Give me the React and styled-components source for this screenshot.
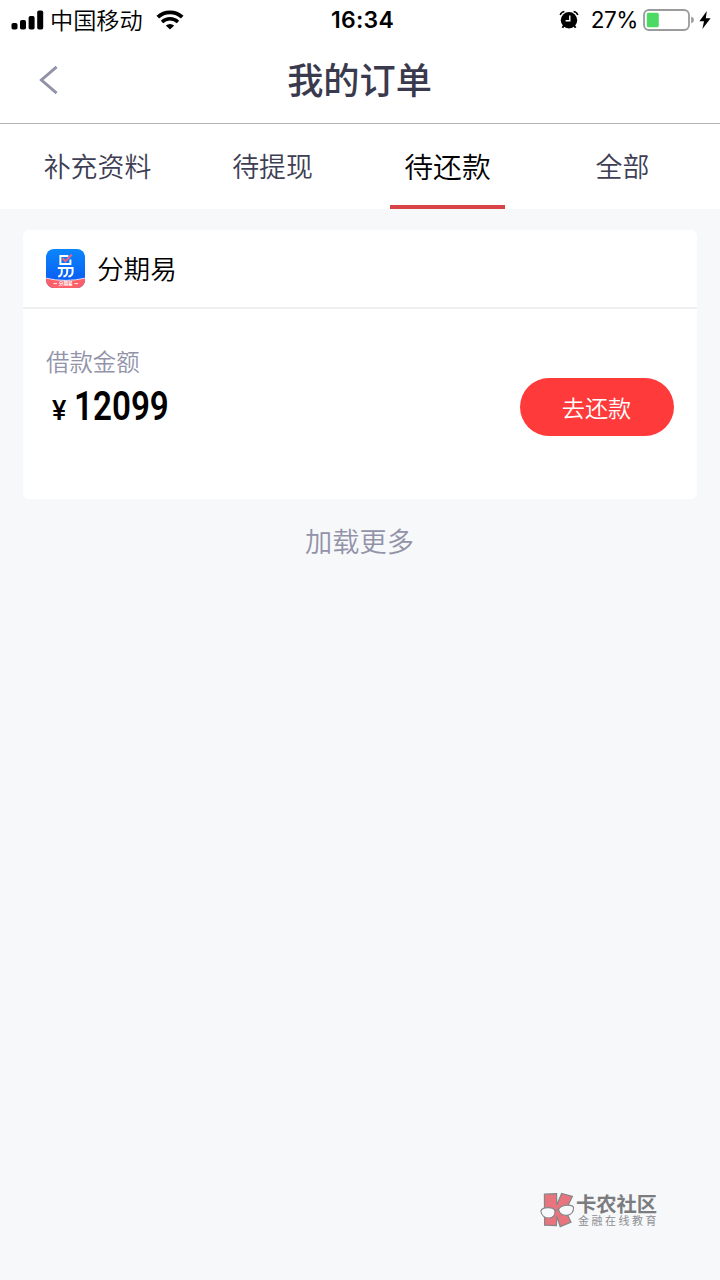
import React from 'react'
import styled, { createGlobalStyle } from 'styled-components'

const tabs = [
  { id: 'info', label: '补充资料' },
  { id: 'withdraw', label: '待提现' },
  { id: 'repay', label: '待还款' },
  { id: 'all', label: '全部' },
]

const App = () => {
  return (
    <Page>
      <GlobalStyle />
      <StatusBar>
        <StatusLeft>
          <SignalIcon />
          <Carrier>中国移动</Carrier>
          <WifiIcon />
        </StatusLeft>
        <Clock>16:34</Clock>
        <StatusRight>
          <AlarmIcon />
          <Percent>27%</Percent>
          <BatteryIcon />
          <BoltIcon />
        </StatusRight>
      </StatusBar>

      <Header>
        <BackButton>
          <BackIcon />
        </BackButton>
        <Title>我的订单</Title>
      </Header>

      <Tabs>
        {tabs.map(tab => (
          <Tab key={tab.id}>
            <TabLabel $active={tab.id === 'repay'}>{tab.label}</TabLabel>
          </Tab>
        ))}
      </Tabs>

      <Content>
        <Card>
          <CardHeader>
            <BrandIcon />
            <Brand>分期易</Brand>
          </CardHeader>
          <CardBody>
            <Loan>
              <LoanLabel>借款金额</LoanLabel>
              <Amount>
                <Currency>¥</Currency>
                <Digits>12099</Digits>
              </Amount>
            </Loan>
            <PayButton>去还款</PayButton>
          </CardBody>
        </Card>
        <LoadMore>加载更多</LoadMore>
      </Content>

      <Footer>
        <CommunityLogo />
        <CommunityText>
          <CommunityName>卡农社区</CommunityName>
          <CommunitySlogan>金融在线教育</CommunitySlogan>
        </CommunityText>
      </Footer>
    </Page>
  )
}

export default App

const SignalIcon = () => (
  <svg width="33" height="20" viewBox="0 0 33 20">
    <rect x="0.5" y="13" width="6" height="6.5" rx="1.8" />
    <rect x="9" y="10" width="6" height="9.5" rx="1.8" />
    <rect x="17.6" y="6" width="6" height="13.5" rx="1.8" />
    <rect x="26.2" y="0.5" width="6" height="19" rx="1.8" />
  </svg>
)

const WifiIcon = () => (
  <svg width="28" height="20" viewBox="0 0 28 20">
    <path d="M1.8 7.2 A17.6 17.6 0 0 1 26.2 7.2" fill="none" stroke="#000" strokeWidth="3.8" />
    <path d="M6 12 A11.6 11.6 0 0 1 22 12" fill="none" stroke="#000" strokeWidth="3.4" />
    <path d="M9.8 15.6 Q14 12.2 18.2 15.6 L14 19.6 Z" />
  </svg>
)

const AlarmIcon = () => (
  <svg width="20" height="20" viewBox="0 0 20 20">
    <circle cx="10" cy="10.2" r="8.2" />
    <path d="M1.2 5 Q2 2 5.4 1.4 M18.8 5 Q18 2 14.6 1.4" fill="none" stroke="#000" strokeWidth="1.5" />
    <path d="M4.8 15.8 L3.4 17.8 M15.2 15.8 L16.6 17.8" stroke="#000" strokeWidth="2" />
    <path d="M10.8 5.4 V10.8 H6.6" fill="none" stroke="#fff" strokeWidth="1.4" />
  </svg>
)

const BatteryIcon = () => (
  <svg width="52" height="22" viewBox="0 0 52 22">
    <rect x="1" y="1" width="45" height="20" rx="5" fill="#fff" stroke="#9b9b9b" strokeWidth="1.8" />
    <rect x="3.8" y="3.8" width="12" height="14.4" rx="1.6" fill="#4cd964" />
    <path d="M48.2 7.6 Q51 8.6 51 11 Q51 13.4 48.2 14.4 Z" fill="#9b9b9b" />
  </svg>
)

const BoltIcon = () => (
  <svg width="12" height="18" viewBox="0 0 12 18">
    <path d="M7.8 0 L0.4 10.2 H5 L3.4 18 L11.6 7.2 H6.8 Z" />
  </svg>
)

const BackIcon = () => (
  <svg width="20" height="30" viewBox="0 0 20 30">
    <path d="M17.6 1.8 L2.4 15 L17.6 28.2" fill="none" stroke="#9192a8" strokeWidth="2.9" />
  </svg>
)

const BrandIcon = () => (
  <svg width="39" height="39" viewBox="0 0 39 39">
    <defs>
      <linearGradient id="brandBlue" x1="0" y1="0" x2="0" y2="1">
        <stop offset="0" stopColor="#0a86fb" />
        <stop offset="1" stopColor="#0a55f3" />
      </linearGradient>
      <clipPath id="brandClip">
        <rect width="39" height="39" rx="8" />
      </clipPath>
    </defs>
    <g clipPath="url(#brandClip)">
      <rect width="39" height="39" fill="url(#brandBlue)" />
      <path d="M-1 29 Q19.5 33.8 40 29 V40 H-1 Z" fill="#fd6068" stroke="#fff" strokeWidth="0.8" />
      <path d="M22.4 6.9 H14.4 V15 H24.4 V10.6" fill="none" stroke="#fff" strokeWidth="2" />
      <path d="M16.6 9.2 L19.4 12.2 L25.8 5.6" fill="none" stroke="#f0627c" strokeWidth="2" />
      <path
        d="M11.8 18.9 H26.6 V22.6 Q26.6 27.2 22.4 27.6 M15.8 19 V23 Q15.6 27 12.2 27.6 M21.2 19 V23 Q21 27 17.4 27.6"
        fill="none"
        stroke="#fff"
        strokeWidth="2"
      />
      <path d="M7.5 34.6 H11 M28.5 34.6 H32" stroke="#fff" strokeWidth="0.9" />
      <SealText x="19.7" y="36.3" textAnchor="middle">分期易</SealText>
    </g>
  </svg>
)

const CommunityLogo = () => (
  <svg width="36" height="38" viewBox="0 0 36 38">
    <path
      d="M4.4 3.2 L16.6 2.6 L16.8 14 L21.6 2.4 L32.4 5.4 L25.6 19.4 L31 31.2 L20.2 35.6 L16.8 25.4 L16.4 34.6 L4.6 34.2 Z"
      fill="#e8747d"
      stroke="#85868a"
      strokeWidth="1.2"
    />
    <g fill="#f7f8fa" stroke="#85868a" strokeWidth="1.1">
      <path d="M0.8 20 Q2 16.6 8 16.6 Q14.6 16.6 15 20.4 Q15 26.6 9 27 Q2 27 0.8 20 Z" />
      <path d="M18.6 18.6 Q20 14.8 26.4 14.2 Q32.8 13.8 33.6 16.6 Q33.6 23.6 27 24.4 Q20 24.8 18.6 18.6 Z" />
      <path d="M15 20 Q16.8 17.8 18.6 18.8" fill="none" />
    </g>
  </svg>
)

const GlobalStyle = createGlobalStyle`
  * {
    box-sizing: border-box;
  }
  body {
    margin: 0;
    background: #f7f8fa;
    font-family: "Noto Sans CJK SC", sans-serif;
  }
  svg {
    display: block;
    flex-shrink: 0;
  }
`

const Page = styled.div`
  width: 720px;
  height: 1280px;
  display: flex;
  flex-direction: column;
  overflow: hidden;
  background: #f7f8fa;
  font-weight: 350;
`

const StatusBar = styled.div`
  height: 40px;
  padding: 0 9px 1px 11px;
  display: grid;
  grid-template-columns: 1fr auto 1fr;
  align-items: center;
  background: #fff;
  color: #000;
`

const StatusLeft = styled.div`
  display: flex;
  align-items: center;
`

const Carrier = styled.span`
  margin: 0 13px 0 6px;
  padding-bottom: 2px;
  font-size: 23.2px;
  line-height: 36px;
`

const Clock = styled.div`
  padding-left: 3px;
  font-family: Inter, sans-serif;
  font-size: 23px;
  font-weight: 600;
  letter-spacing: 0.3px;
`

const StatusRight = styled.div`
  display: flex;
  align-items: center;
  justify-content: flex-end;
`

const Percent = styled.span`
  margin: 0 5px 0 12px;
  font-family: Inter, sans-serif;
  font-size: 22.5px;
  font-weight: 400;
  letter-spacing: -0.4px;

  & + svg {
    margin-right: 4px;
  }
`

const Header = styled.div`
  height: 84px;
  padding: 0 39px 4px;
  display: grid;
  grid-template-columns: 60px 1fr 60px;
  align-items: center;
  background: #fff;
  border-bottom: 1px solid #b2b2b2;
`

const BackButton = styled.div`
  cursor: pointer;
`

const Title = styled.h1`
  margin: 0;
  padding: 0 1px 3px 0;
  text-align: center;
  font-size: 36.2px;
  font-weight: 500;
  line-height: 52px;
  color: #3a3a4e;
`

const Tabs = styled.div`
  height: 85px;
  padding: 0 10px;
  display: flex;
  background: #fff;
`

const Tab = styled.div`
  flex: 1;
  display: flex;
  justify-content: center;
  cursor: pointer;
`

const TabLabel = styled.div`
  min-width: 115px;
  height: 85px;
  text-align: center;
  font-size: ${props => props.$active ? '28.8px' : '26.9px'};
  line-height: 84px;
  color: ${props => props.$active ? '#000' : '#3e3e54'};
  border-bottom: ${props => props.$active ? '4px solid #d84345' : 'none'};
`

const Content = styled.div`
  flex: 1;
  padding: 21px 23px 0;
`

const Card = styled.div`
  height: 269px;
  background: #fff;
  border-radius: 6px;
`

const CardHeader = styled.div`
  height: 79px;
  padding: 0 23px;
  display: flex;
  align-items: center;
  border-bottom: 2px solid #efeff0;
`

const Brand = styled.div`
  margin-left: 12px;
  padding-bottom: 2px;
  font-size: 26.6px;
  line-height: 40px;
  color: #000;
`

const SealText = styled.text`
  font-size: 4.6px;
  font-weight: 700;
  fill: #fff;
`

const CardBody = styled.div`
  padding: 34px 23px 0;
  display: flex;
  justify-content: space-between;
  align-items: flex-start;
`

const Loan = styled.div`
  padding-top: 1px;
`

const LoanLabel = styled.div`
  font-size: 23.4px;
  line-height: 34px;
  color: #9293a9;
`

const Amount = styled.div`
  height: 56px;
  padding-left: 6px;
  display: flex;
  align-items: baseline;
  color: #000;
  line-height: 56px;
`

const Currency = styled.span`
  width: 22px;
  font-family: Roboto, sans-serif;
  font-size: 27px;
  font-weight: 500;
`

const Digits = styled.span`
  font-family: Roboto, sans-serif;
  font-size: 41.5px;
  font-weight: 600;
  transform: scaleX(0.8);
  transform-origin: left;
`

const PayButton = styled.button`
  width: 154px;
  height: 58px;
  margin-top: 35px;
  padding: 0 1px 1px 0;
  border: none;
  border-radius: 29px;
  background: #fe3a3b;
  color: #fff;
  font-family: inherit;
  font-size: 23.2px;
  font-weight: 350;
  cursor: pointer;
`

const LoadMore = styled.div`
  margin-top: 21px;
  padding-right: 1px;
  text-align: center;
  font-size: 27.2px;
  line-height: 40px;
  color: #9293a9;
`

const Footer = styled.div`
  height: 92px;
  padding: 3px 61px 0 0;
  display: flex;
  justify-content: flex-end;
  align-items: flex-start;
`

const CommunityText = styled.div`
  white-space: nowrap;
`

const CommunityName = styled.div`
  font-size: 20.3px;
  font-weight: 700;
  line-height: 24px;
  color: #7b7c7f;
`

const CommunitySlogan = styled.div`
  padding-left: 2px;
  font-size: 11px;
  font-weight: 400;
  letter-spacing: 2.5px;
  line-height: 11px;
  color: #8d8e92;
`
